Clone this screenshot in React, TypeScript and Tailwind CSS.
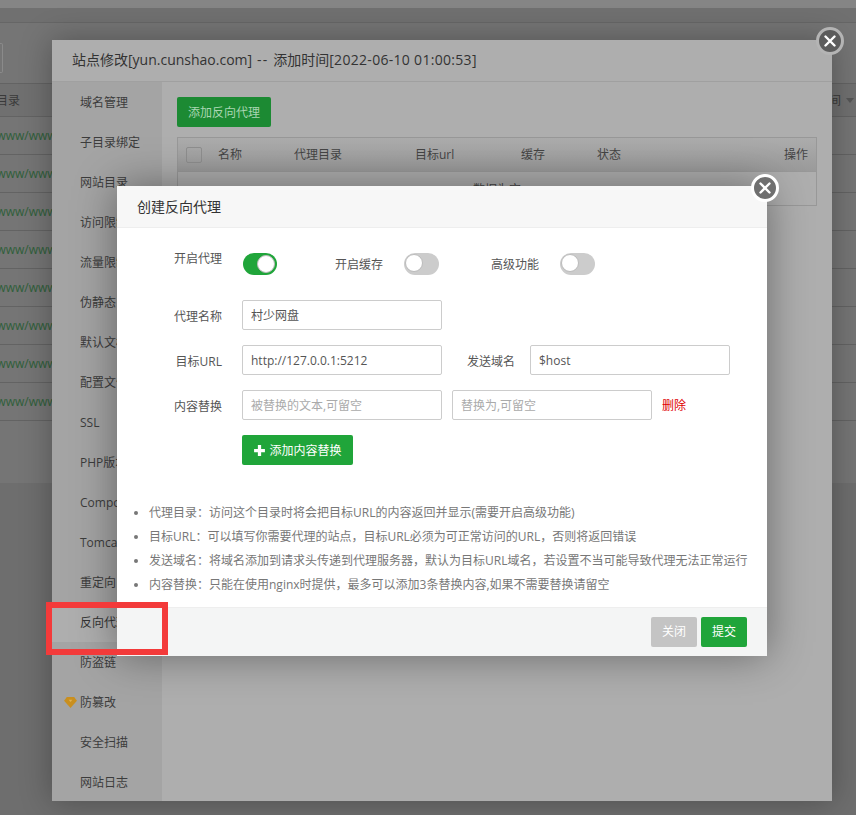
const font = "font-['Open_Sans','Noto_Sans_CJK_SC',sans-serif]";

const sideItems = [
  "域名管理",
  "子目录绑定",
  "网站目录",
  "访问限制",
  "流量限制",
  "伪静态",
  "默认文档",
  "配置文件",
  "SSL",
  "PHP版本",
  "Composer",
  "Tomcat",
  "重定向",
  "反向代理",
  "防盗链",
  "防篡改",
  "安全扫描",
  "网站日志",
];

const tips = [
  "代理目录：访问这个目录时将会把目标URL的内容返回并显示(需要开启高级功能)",
  "目标URL：可以填写你需要代理的站点，目标URL必须为可正常访问的URL，否则将返回错误",
  "发送域名：将域名添加到请求头传递到代理服务器，默认为目标URL域名，若设置不当可能导致代理无法正常运行",
  "内容替换：只能在使用nginx时提供，最多可以添加3条替换内容,如果不需要替换请留空",
];

const Toggle = ({ on }: { on?: boolean }) => (
  <div
    className={
      on
        ? "flex h-[22px] w-[34px] justify-end rounded-full bg-[#20a53a] p-[2px]"
        : "flex h-[22px] w-[35px] justify-start rounded-full bg-[#cccccc] p-[1px]"
    }
  >
    <div className="h-[18px] w-[18px] rounded-full border border-[#bbbbbb] bg-white" />
  </div>
);

const Field = ({ value, placeholder }: { value?: string; placeholder?: string }) => (
  <input
    readOnly
    value={value}
    placeholder={placeholder}
    className="h-[30px] w-[200px] rounded-[2px] border border-[#cccccc] bg-white px-[8px] text-xs text-[#555555] outline-none placeholder:text-[#aaaaaa]"
  />
);

const Label = ({ children }: { children: string }) => (
  <span className="h-[30px] w-12 whitespace-nowrap text-right text-xs leading-[34px] text-[#555555]">{children}</span>
);

const CloseBtn = ({ className }: { className: string }) => (
  <div className={"absolute flex h-7 w-7 items-center justify-center rounded-full " + className}>
    <svg viewBox="0 0 12 12" className="h-3 w-3">
      <path d="M1.5 1.5l9 9M10.5 1.5l-9 9" stroke="#ffffff" strokeWidth="2.4" strokeLinecap="round" />
    </svg>
  </div>
);

const BackPage = () => (
  <div className="h-full bg-[#6e6e6e]">
    <div className="h-2 bg-[#858585]" />
    <div className="h-[15px] border-b border-[#666666] bg-[#707070]" />
    <div className="h-[60px] bg-[#757575] pt-[20px]">
      <div className="h-[30px] w-[3px] rounded-r-[2px] border border-l-0 border-[#8a8a8a]" />
    </div>
    <div className="h-[400px] bg-[#757575]">
      <div className="flex h-[34px] items-center justify-between border-y border-[#636363] bg-[#707070] pt-px text-xs text-[#3a3a3a]">
        <span className="-ml-[4px]">目录</span>
        <span className="flex items-center gap-[5px] pr-[2px]">
          间
          <span className="h-0 w-0 border-x-[4px] border-t-[5px] border-x-transparent border-t-[#555555]" />
        </span>
      </div>
      {[0, 1, 2, 3, 4, 5, 6, 7].map((n) => (
        <div
          key={n}
          className="-ml-[8px] flex h-[38px] items-center border-b border-[#636363] pt-px text-xs whitespace-nowrap text-[#2f5f3a]"
        >
          /www/wwwroot
        </div>
      ))}
    </div>
  </div>
);

const SiteModal = () => (
  <div className="absolute top-10 left-[52px] flex h-[761px] w-[780px] flex-col bg-[#aeaeae] shadow-[0_0_30px_rgba(0,0,0,0.3)]">
    <div className="h-[42px] shrink-0 border-b border-[#a0a0a0] pl-5 text-sm leading-[40px] whitespace-nowrap text-[#333333]">
      站点修改[yun.cunshao.com]<span className="tracking-[1.2px]"> -- </span>添加时间
      <span className="tracking-[0.3px]">[2022-06-10 01:00:53]</span>
    </div>
    <div className="flex min-h-0 flex-1">
      <div className="w-[110px] shrink-0 bg-[#a4a4a4]">
        {sideItems.map((item) => (
          <div
            key={item}
            className={
              item === "反向代理"
                ? "relative h-10 bg-[#aeaeae] pl-7 text-xs leading-[42px] text-[#333333]"
                : "relative h-10 pl-7 text-xs leading-[42px] text-[#3c3c3c]"
            }
          >
            {item === "防篡改" && (
              <svg viewBox="0 0 14 12" className="absolute top-[15px] left-[12px] h-[11px] w-[13px]">
                <path d="M3 0h8l3 4-7 8-7-8z" fill="#c98f1f" />
                <path d="M5 3h4l-2 2.5z" fill="#e0b050" />
              </svg>
            )}
            {item}
          </div>
        ))}
      </div>
      <div className="flex-1 px-[15px] pt-[15px]">
        <div className="flex h-[30px] w-[94px] items-center justify-center rounded-[2px] bg-[#1c8a33] pt-px text-xs text-[#a9d6b2]">
          添加反向代理
        </div>
        <div className="mt-[10px] h-[69px] border border-[#989898]">
          <div className="flex h-[34px] items-center border-b border-[#989898] bg-gradient-to-b from-[#acacac] to-[#9a9a9a] text-xs text-[#444444]">
            <div className="ml-2 h-4 w-4 rounded-[2px] border border-[#8e8e8e]" />
            <span className="ml-4 w-[76px]">名称</span>
            <span className="w-[121px]">代理目录</span>
            <span className="w-[106px]">目标url</span>
            <span className="w-[76px]">缓存</span>
            <span className="flex-1">状态</span>
            <span className="pr-2">操作</span>
          </div>
          <div className="h-[34px] pt-[10px] text-center text-xs text-[#444444]">数据为空</div>
        </div>
      </div>
    </div>
  </div>
);

const ProxyModal = () => (
  <div className="absolute top-[186px] left-[117px] flex h-[470px] w-[650px] flex-col bg-white shadow-[0_0_40px_rgba(0,0,0,0.4)]">
    <div className="h-[42px] shrink-0 border-b border-[#eeeeee] bg-[#f7f7f7] pl-5 text-sm leading-[41px] text-[#333333]">
      创建反向代理
    </div>
    <div className="flex-1 pt-[25px]">
      <div className="flex items-start pl-[57px] text-xs text-[#555555]">
        <span className="w-12 leading-3">开启代理</span>
        <div className="ml-[21px]">
          <Toggle on />
        </div>
        <span className="ml-[58px] leading-6">开启缓存</span>
        <div className="ml-[21px]">
          <Toggle />
        </div>
        <span className="ml-[52px] leading-6">高级功能</span>
        <div className="ml-[21px]">
          <Toggle />
        </div>
      </div>
      <div className="mt-[23px] flex flex-col gap-[15px] pl-[57px]">
        <div className="flex gap-5">
          <Label>代理名称</Label>
          <Field value="村少网盘" />
        </div>
        <div className="flex gap-5">
          <Label>目标URL</Label>
          <Field value="http://127.0.0.1:5212" />
          <div className="ml-[5px] flex gap-[15px]">
            <Label>发送域名</Label>
            <Field value="$host" />
          </div>
        </div>
        <div className="flex gap-5">
          <Label>内容替换</Label>
          <div className="flex items-center gap-[10px]">
            <Field placeholder="被替换的文本,可留空" />
            <Field placeholder="替换为,可留空" />
            <span className="pt-[2px] text-xs text-[#e00000]">删除</span>
          </div>
        </div>
        <div className="pl-[68px]">
          <div className="flex h-[30px] w-[111px] items-center justify-center gap-[3px] rounded-[2px] bg-[#20a53a] pt-px text-xs text-white">
            <svg viewBox="0 0 12 12" className="h-[13px] w-[13px]">
              <path d="M6 1v10M1 6h10" stroke="#ffffff" strokeWidth="3" />
            </svg>
            添加内容替换
          </div>
        </div>
      </div>
      <ul className="mt-[36px] list-disc pl-8 text-xs leading-6 text-[#777777]">
        {tips.map((tip) => (
          <li key={tip} className="whitespace-nowrap">
            {tip}
          </li>
        ))}
      </ul>
    </div>
    <div className="flex h-[49px] shrink-0 items-center justify-end gap-1 border-t border-[#eeeeee] bg-[#f4f5f5] pr-5">
      <div className="flex h-[30px] w-[46px] items-center justify-center rounded-[2px] bg-[#c4c4c4] text-xs text-white">
        关闭
      </div>
      <div className="flex h-[30px] w-[46px] items-center justify-center rounded-[2px] bg-[#20a53a] text-xs text-white">
        提交
      </div>
    </div>
  </div>
);

export default function App() {
  return (
    <div className={"relative h-[815px] w-[856px] overflow-hidden " + font}>
      <BackPage />
      <SiteModal />
      <CloseBtn className="top-[27px] left-[816px] border-[3px] border-[#b4b4b4] bg-[#5c5c5c]" />
      <ProxyModal />
      <CloseBtn className="top-[174px] left-[751px] border-[3px] border-white bg-[#6f6f6f]" />
      <div className="absolute top-[602px] left-[46px] h-[53px] w-[122px] border-[6px] border-[#f33a3a]" />
    </div>
  );
}
